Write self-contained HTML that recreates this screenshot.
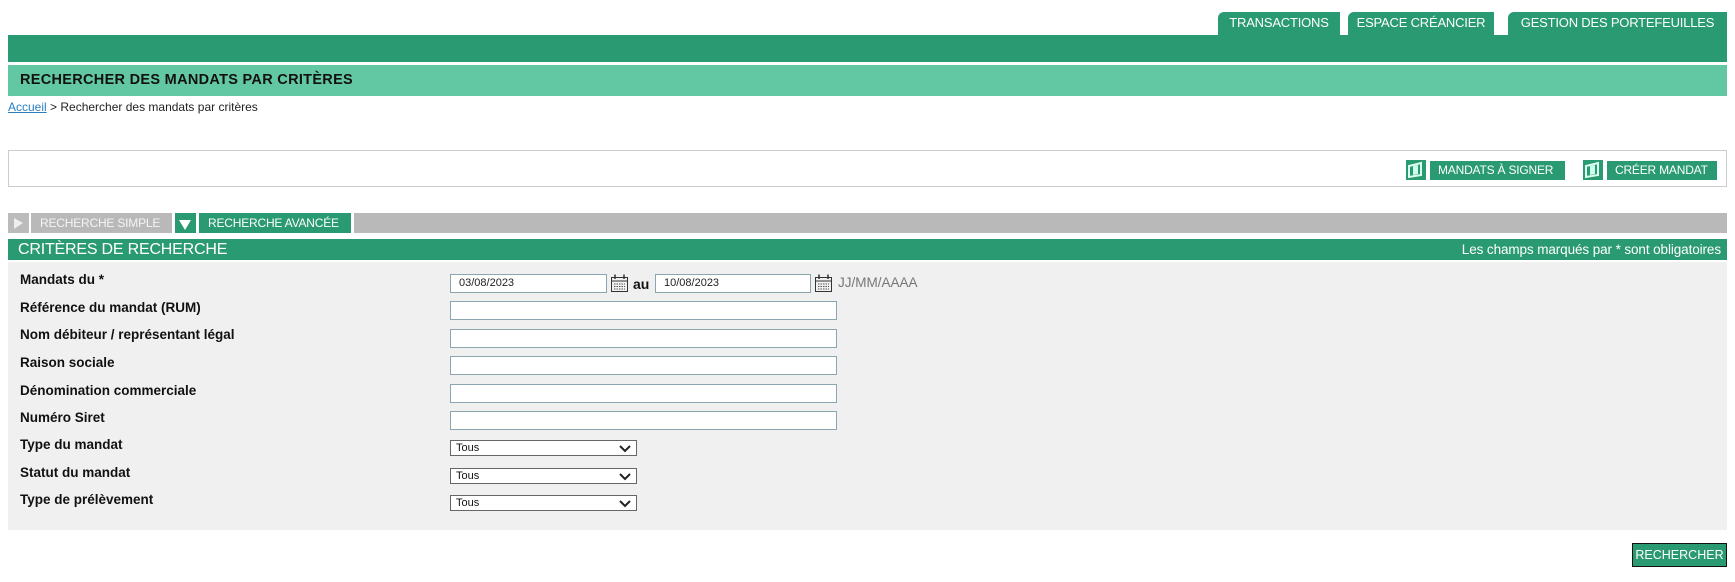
<!DOCTYPE html>
<html><head><meta charset="utf-8"><style>
*{margin:0;padding:0;box-sizing:border-box}
body{width:1735px;height:582px;background:#fff;font-family:"Liberation Sans",Arial,sans-serif;position:relative;overflow:hidden}
.a{position:absolute}
.tab{position:absolute;top:12px;height:24px;background:#299a72;color:#fff;font-size:13px;line-height:22px;text-align:center;border-radius:6px 0 0 0;letter-spacing:-0.2px}
.lbl{position:absolute;left:20px;font-size:13.5px;font-weight:bold;color:#111}
.inp{position:absolute;left:450px;width:387px;height:19px;background:#fff;border:1px solid #8aa6b0}
.sel{position:absolute;left:450px;width:187px;height:16px;background:#fff;border:1px solid #666;font-size:11px;line-height:14px;padding-left:5px;color:#111}
.sel svg{position:absolute;right:5px;top:4px}
.btn{position:absolute;top:161px;height:19px;background:#299a72;color:#fff;font-size:12px;line-height:19px;padding-left:8px;letter-spacing:-0.2px}
.ic{position:absolute;top:160px;width:20px;height:20px;background:#299a72}
</style></head><body>
<div class="tab" style="left:1218px;width:122px">TRANSACTIONS</div>
<div class="tab" style="left:1348px;width:146px">ESPACE CRÉANCIER</div>
<div class="tab" style="left:1508px;width:219px">GESTION DES PORTEFEUILLES</div>
<div class="a" style="left:8px;top:35px;width:1719px;height:27px;background:#299a72"></div>
<div class="a" style="left:8px;top:65px;width:1719px;height:31px;background:#62c7a3;font-size:14.5px;font-weight:bold;line-height:31px;padding-left:12px;color:#111;letter-spacing:.3px">RECHERCHER DES MANDATS PAR CRITÈRES</div>
<div class="a" style="left:8px;top:100px;font-size:12px;color:#222"><span style="color:#2b7fc0;text-decoration:underline">Accueil</span> &gt; Rechercher des mandats par critères</div>
<div class="a" style="left:8px;top:150px;width:1719px;height:37px;border:1px solid #ccc"></div>
<div class="ic" style="left:1406px"><svg width="20" height="20"><path d="M3 6L15 3V15L3 17Z" fill="none" stroke="#dfe" stroke-width="2"/><path d="M7 6L12 5V14L7 15Z" fill="#cfe"/></svg></div>
<div class="btn" style="left:1430px;width:135px">MANDATS À SIGNER</div>
<div class="ic" style="left:1583px"><svg width="20" height="20"><path d="M3 6L15 3V15L3 17Z" fill="none" stroke="#dfe" stroke-width="2"/><path d="M7 6L12 5V14L7 15Z" fill="#cfe"/></svg></div>
<div class="btn" style="left:1607px;width:110px">CRÉER MANDAT</div>
<div class="a" style="left:8px;top:213px;width:1719px;height:20px;background:#b9b9b9"></div>
<div class="a" style="left:8px;top:213px;width:21px;height:20px;background:#bbb"><svg width="21" height="20"><path d="M6 5L15 10L6 16Z" fill="#eee"/></svg></div>
<div class="a" style="left:29px;top:213px;width:2px;height:20px;background:#fff"></div>
<div class="a" style="left:31px;top:213px;width:141px;height:20px;background:#b9b9b9;color:#f4f4f4;font-size:12px;line-height:20px;padding-left:9px;letter-spacing:-0.2px">RECHERCHE SIMPLE</div>
<div class="a" style="left:172px;top:213px;width:3px;height:20px;background:#fff"></div>
<div class="a" style="left:175px;top:213px;width:21px;height:20px;background:#299a72"><svg width="21" height="20"><path d="M4 7L16 7L10 17Z" fill="#fff"/></svg></div>
<div class="a" style="left:196px;top:213px;width:3px;height:20px;background:#fff"></div>
<div class="a" style="left:199px;top:213px;width:152px;height:20px;background:#299a72;color:#fff;font-size:12px;line-height:20px;padding-left:9px;letter-spacing:-0.2px">RECHERCHE AVANCÉE</div>
<div class="a" style="left:351px;top:213px;width:3px;height:20px;background:#fff"></div>
<div class="a" style="left:8px;top:239px;width:1719px;height:21px;background:#299a72;color:#fff"><span style="position:absolute;left:10px;top:1px;font-size:16px;line-height:20px;letter-spacing:-0.2px">CRITÈRES DE RECHERCHE</span><span style="position:absolute;right:6px;top:2px;font-size:13.5px;line-height:18px;letter-spacing:-0.1px">Les champs marqués par * sont obligatoires</span></div>
<div class="a" style="left:8px;top:262px;width:1719px;height:268px;background:#f0f0f0"></div>
<div class="lbl" style="top:272px">Mandats du *</div>
<div class="lbl" style="top:300px">Référence du mandat (RUM)</div>
<div class="lbl" style="top:327px">Nom débiteur / représentant légal</div>
<div class="lbl" style="top:355px">Raison sociale</div>
<div class="lbl" style="top:383px">Dénomination commerciale</div>
<div class="lbl" style="top:410px">Numéro Siret</div>
<div class="lbl" style="top:437px">Type du mandat</div>
<div class="lbl" style="top:465px">Statut du mandat</div>
<div class="lbl" style="top:492px">Type de prélèvement</div>
<div class="inp" style="top:274px;width:157px;font-size:11px;line-height:17px;padding-left:8px;color:#222">03/08/2023</div>
<svg class="a" style="left:610px;top:273px" width="19" height="20"><path d="M1.5 4.5H17.5V18.5H1.5Z M1.5 8H17.5" fill="none" stroke="#333"/><path d="M5 1.5V6M14 1.5V6" stroke="#333" stroke-width="1.5"/><path d="M4 11H15M4 13.5H15M4 16H15" stroke="#555" stroke-dasharray="1.5 1"/></svg>
<div class="a" style="left:633px;top:276px;font-size:14px;font-weight:bold;color:#111">au</div>
<div class="inp" style="top:274px;left:655px;width:156px;font-size:11px;line-height:17px;padding-left:8px;color:#222">10/08/2023</div>
<svg class="a" style="left:814px;top:273px" width="19" height="20"><path d="M1.5 4.5H17.5V18.5H1.5Z M1.5 8H17.5" fill="none" stroke="#333"/><path d="M5 1.5V6M14 1.5V6" stroke="#333" stroke-width="1.5"/><path d="M4 11H15M4 13.5H15M4 16H15" stroke="#555" stroke-dasharray="1.5 1"/></svg>
<div class="a" style="left:838px;top:275px;font-size:13.5px;color:#777">JJ/MM/AAAA</div>
<div class="inp" style="top:301px"></div>
<div class="inp" style="top:329px"></div>
<div class="inp" style="top:356px"></div>
<div class="inp" style="top:384px"></div>
<div class="inp" style="top:411px"></div>
<div class="sel" style="top:440px">Tous<svg width="12" height="8"><path d="M1 1L6 6L11 1" fill="none" stroke="#222" stroke-width="2"/></svg></div>
<div class="sel" style="top:468px">Tous<svg width="12" height="8"><path d="M1 1L6 6L11 1" fill="none" stroke="#222" stroke-width="2"/></svg></div>
<div class="sel" style="top:495px">Tous<svg width="12" height="8"><path d="M1 1L6 6L11 1" fill="none" stroke="#222" stroke-width="2"/></svg></div>
<div class="a" style="left:1632px;top:543px;width:95px;height:24px;background:#299a72;border:1px solid #111;color:#fff;font-size:12.5px;line-height:22px;text-align:center">RECHERCHER</div>
</body></html>
